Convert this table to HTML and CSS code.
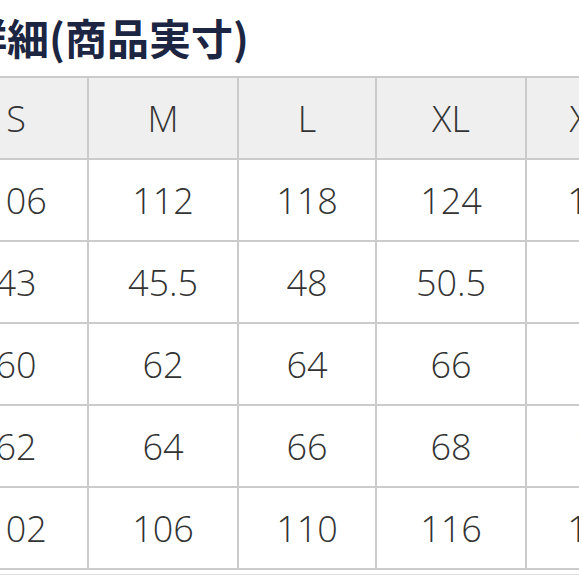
FILE: index.html
```html
<!DOCTYPE html>
<html lang="ja">
<head>
<meta charset="utf-8">
<title>サイズ詳細</title>
<link rel="stylesheet" href="styles.css">
</head>
<body>
<div class="page">
  <h1 class="title">詳細(商品実寸)</h1>
  <table class="size-table">
    <colgroup>
      <col class="c1"><col class="c2"><col class="c3"><col class="c4"><col class="c5">
    </colgroup>
    <thead>
      <tr><th>S</th><th>M</th><th>L</th><th>XL</th><th>XXL</th></tr>
    </thead>
    <tbody>
      <tr><td>106</td><td>112</td><td>118</td><td>124</td><td>130</td></tr>
      <tr><td>43</td><td>45.5</td><td>48</td><td>50.5</td><td>53</td></tr>
      <tr><td>60</td><td>62</td><td>64</td><td>66</td><td>68</td></tr>
      <tr><td>62</td><td>64</td><td>66</td><td>68</td><td>70</td></tr>
      <tr><td>102</td><td>106</td><td>110</td><td>116</td><td>122</td></tr>
    </tbody>
  </table>
  <div class="next-rule"></div>
</div>
</body>
</html>
```

FILE: styles.css
```css
html, body {
  margin: 0;
  padding: 0;
  background: #ffffff;
  overflow: hidden;
}

.page {
  width: 579px;
  height: 579px;
  overflow: hidden;
}

.title {
  margin: 0 0 0 -35px;
  height: 76px;
  line-height: 74px;
  font-family: "Noto Sans CJK JP", sans-serif;
  font-weight: 700;
  font-size: 42px;
  color: #1c2541;
  white-space: nowrap;
  letter-spacing: 0;
}

.size-table {
  margin-left: -57px;
  border-collapse: collapse;
  table-layout: fixed;
  width: 726px;
  font-family: "Open Sans", sans-serif;
  font-weight: 300;
  font-size: 36px;
  color: #333333;
}

.c1 { width: 144px; }
.c2 { width: 150px; }
.c3 { width: 138px; }
.c4 { width: 150px; }
.c5 { width: 144px; }

.size-table tr {
  height: 82px;
}

.size-table th,
.size-table td {
  border: 2px solid #cbcbcb;
  padding: 0;
  text-align: center;
  vertical-align: middle;
  font-weight: 300;
}

.size-table th {
  background: #efefef;
}

.size-table td {
  background: #ffffff;
}

.next-rule {
  margin-top: 4px;
  border-top: 1px solid #dedede;
}
```
